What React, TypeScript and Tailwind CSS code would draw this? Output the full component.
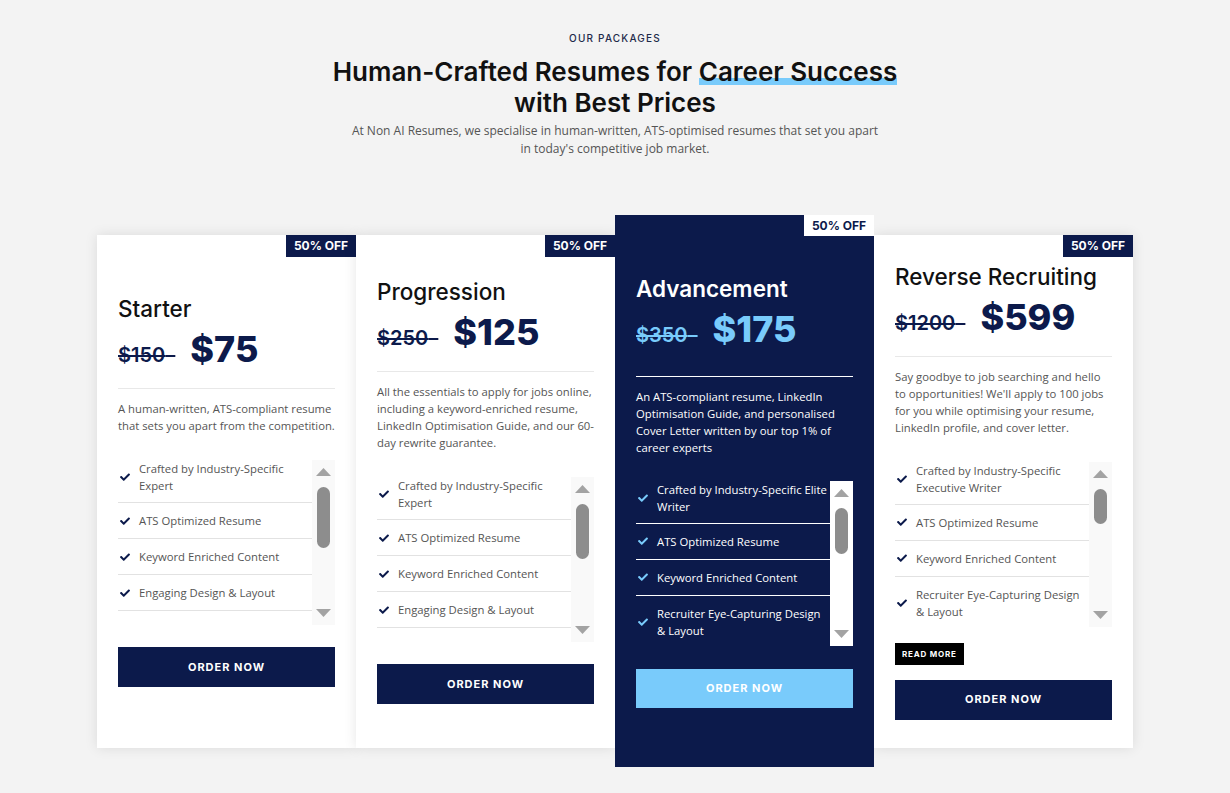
import React from "react";

type Plan = {
  name: string;
  oldPrice: string;
  price: string;
  desc: string;
  features: string[];
  thumb: string;
  featured?: boolean;
  readMore?: boolean;
};

const plans: Plan[] = [
  {
    name: "Starter",
    oldPrice: "$150",
    price: "$75",
    desc: "A human-written, ATS-compliant resume that sets you apart from the competition.",
    features: [
      "Crafted by Industry-Specific Expert",
      "ATS Optimized Resume",
      "Keyword Enriched Content",
      "Engaging Design & Layout",
      "Dedicated Writer Support",
      "2 Rounds of Revisions",
    ],
    thumb: "h-[61px]",
  },
  {
    name: "Progression",
    oldPrice: "$250",
    price: "$125",
    desc: "All the essentials to apply for jobs online, including a keyword-enriched resume, LinkedIn Optimisation Guide, and our 60-day rewrite guarantee.",
    features: [
      "Crafted by Industry-Specific Expert",
      "ATS Optimized Resume",
      "Keyword Enriched Content",
      "Engaging Design & Layout",
      "Dedicated Writer Support",
      "LinkedIn Optimisation Guide",
      "60-Day Rewrite Guarantee",
    ],
    thumb: "h-[55px]",
  },
  {
    name: "Advancement",
    oldPrice: "$350",
    price: "$175",
    desc: "An ATS-compliant resume, LinkedIn Optimisation Guide, and personalised Cover Letter written by our top 1% of career experts",
    features: [
      "Crafted by Industry-Specific Elite Writer",
      "ATS Optimized Resume",
      "Keyword Enriched Content",
      "Recruiter Eye-Capturing Design & Layout",
      "Dedicated Writer Support",
      "Personalised Cover Letter",
      "LinkedIn Optimisation Guide",
    ],
    thumb: "h-[46px]",
    featured: true,
  },
  {
    name: "Reverse Recruiting",
    oldPrice: "$1200",
    price: "$599",
    desc: "Say goodbye to job searching and hello to opportunities! We'll apply to 100 jobs for you while optimising your resume, LinkedIn profile, and cover letter.",
    features: [
      "Crafted by Industry-Specific Executive Writer",
      "ATS Optimized Resume",
      "Keyword Enriched Content",
      "Recruiter Eye-Capturing Design & Layout",
      "Dedicated Writer Support",
      "LinkedIn Profile Optimisation",
      "100 Job Applications Done For You",
      "Personalised Cover Letter",
    ],
    thumb: "h-[35px]",
    readMore: true,
  },
];

function Check({ color }: { color: string }) {
  return (
    <svg width="10" height="8" viewBox="0 0 512 400" fill={color}>
      <path d="M173.9 391.4l-166.4-166.4c-10-10-10-26.2 0-36.2l36.2-36.2c10-10 26.2-10 36.2 0L192 264.7 432.1 24.6c10-10 26.2-10 36.2 0l36.2 36.2c10 10 10 26.2 0 36.2l-294.4 294.4c-10 10-26.2 10-36.2 0z" />
    </svg>
  );
}

function Scrollbar({ thumb, dark }: { thumb: string; dark?: boolean }) {
  return (
    <div
      className={`flex w-[23px] shrink-0 flex-col items-center ${
        dark ? "bg-white" : "bg-[#f9f9f9]"
      }`}
    >
      <svg className="mt-[8px]" width="15" height="8" viewBox="0 0 15 8">
        <polygon points="7.5,0 15,8 0,8" fill="#a3a3a3" />
      </svg>
      <div className={`mt-[11px] w-[13px] rounded-full bg-[#8d8d8d] ${thumb}`} />
      <svg className="mb-[8px] mt-auto" width="15" height="8" viewBox="0 0 15 8">
        <polygon points="0,0 15,0 7.5,8" fill="#a3a3a3" />
      </svg>
    </div>
  );
}

function PlanCard({ plan }: { plan: Plan }) {
  const dark = plan.featured;

  return (
    <div
      className={`relative flex w-[259px] flex-col justify-center px-[21px] ${
        dark
          ? "z-10 h-[552px] bg-[#0c1a4b]"
          : "h-[513px] bg-white shadow-[0_0_12px_rgba(0,0,0,0.1)]"
      }`}
    >
      <span
        className={`absolute right-0 top-0 flex items-center px-[8px] font-['Inter',sans-serif] text-[12px] font-bold ${
          dark ? "h-[21px] bg-white text-[#0c1a4b]" : "h-[22px] bg-[#0c1a4b] text-white"
        }`}
      >
        50% OFF
      </span>

      <h3
        className={`font-['Inter',sans-serif] text-[22.5px] leading-[28px] ${
          dark ? "font-semibold text-white" : "font-medium text-[#111]"
        }`}
      >
        {plan.name}
      </h3>

      <div
        className={`mt-[6px] flex h-[40px] items-baseline font-['Inter',sans-serif] ${
          dark ? "text-[#79cbfb]" : "text-[#0c1a4b]"
        }`}
      >
        <span className="text-[20px] font-semibold line-through decoration-2">
          {plan.oldPrice}
          {"\u00a0\u00a0"}
        </span>
        <span className="ml-[15px] text-[36px] font-extrabold leading-[40px]">{plan.price}</span>
      </div>

      <div
        className={`border-t ${
          dark ? "mt-[27px] border-white" : "mt-[19px] border-[#e8e8e8]"
        }`}
      />

      <p
        className={`mt-[11px] font-['Open_Sans',sans-serif] text-[11.3px] leading-[17px] ${
          dark ? "text-white" : "text-[#555]"
        }`}
      >
        {plan.desc}
      </p>

      <div className={`flex h-[165px] ${dark ? "mt-[25px]" : "mt-[26px]"}`}>
        <ul className="flex-1 overflow-hidden">
          {plan.features.map((f, i) => (
            <li
              key={i}
              className={`flex items-center border-b ${i === 0 ? "pb-[8px] pt-0" : "py-[9px]"} ${
                dark ? "border-white" : "border-[#e2e2e2]"
              }`}
            >
              <span className="flex w-[21px] shrink-0 pl-[2px]">
                <Check color={dark ? "#79cbfb" : "#0c1a4b"} />
              </span>
              <span
                className={`font-['Open_Sans',sans-serif] text-[11.3px] leading-[17px] ${
                  dark ? "text-white" : "text-[#555]"
                }`}
              >
                {f}
              </span>
            </li>
          ))}
        </ul>
        <Scrollbar thumb={plan.thumb} dark={dark} />
      </div>

      {plan.readMore && (
        <button className="mt-[16px] h-[22px] self-start bg-black px-[7px] font-['Inter',sans-serif] text-[8px] font-bold tracking-[0.8px] text-white">
          READ MORE
        </button>
      )}

      <button
        className={`w-full font-['Inter',sans-serif] text-[11px] font-bold tracking-[1px] text-white ${
          plan.readMore ? "mt-[15px] h-[40px]" : dark ? "mt-[23px] h-[39px]" : "mt-[22px] h-[40px]"
        } ${dark ? "bg-[#79cbfb]" : "bg-[#0c1a4b]"}`}
      >
        ORDER NOW
      </button>
    </div>
  );
}

export default function App() {
  return (
    <div className="min-h-[793px] w-full bg-[#f3f3f3] pt-[31px]">
      <p className="text-center font-['Inter',sans-serif] text-[10px] font-medium leading-[14px] tracking-[1.2px] text-[#1e2a4a]">
        OUR PACKAGES
      </p>
      <h2 className="mt-[11px] text-center font-['Inter',sans-serif] text-[26px] font-semibold leading-[31px] text-[#111]">
        Human-Crafted Resumes for{" "}
        <span className="relative isolate inline-block">
          Career Success
          <span className="absolute bottom-[2px] left-0 right-0 -z-10 h-[7px] bg-[#79cbfb]" />
        </span>
        <br />
        with Best Prices
      </h2>
      <p className="mx-auto mt-[4px] w-[640px] text-center font-['Open_Sans',sans-serif] text-[12px] leading-[18px] text-[#555]">
        At Non AI Resumes, we specialise in human-written, ATS-optimised resumes that set you apart
        <br />
        in today's competitive job market.
      </p>

      <div className="mt-[57px] flex items-center justify-center">
        {plans.map((p) => (
          <PlanCard key={p.name} plan={p} />
        ))}
      </div>
    </div>
  );
}
